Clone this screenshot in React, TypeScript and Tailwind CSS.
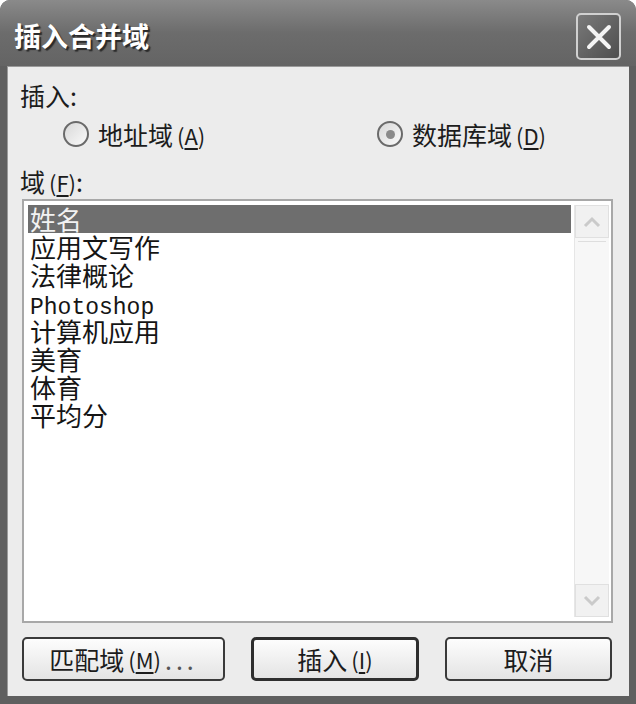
import type { ReactNode } from 'react'

const FONT = { fontFamily: '"Noto Sans CJK SC", "Liberation Sans", sans-serif' }

const fields = ['姓名', '应用文写作', '法律概论', 'Photoshop', '计算机应用', '美育', '体育', '平均分']

function Key({ k }: { k: string }) {
  return (
    <span className="ml-[4px] text-[22px]">
      (<span className="underline underline-offset-[3px]">{k}</span>)
    </span>
  )
}

function Radio({ checked, children }: { checked?: boolean; children: ReactNode }) {
  return (
    <div className="flex items-center gap-[9px]">
      <span className="flex h-[26px] w-[26px] items-center justify-center rounded-full border-2 border-[#6a6a6a] bg-gradient-to-br from-[#d8d8d8] to-[#fafafa]">
        {checked && <span className="h-[9px] w-[9px] rounded-full bg-[#8a8a8a]" />}
      </span>
      <span className="text-[25px] leading-[28px] text-[#1c1c1c]">{children}</span>
    </div>
  )
}

function Btn({ w, strong, children }: { w: string; strong?: boolean; children: ReactNode }) {
  return (
    <button
      className={`${w} flex h-[44px] items-center justify-center rounded-[5px] bg-gradient-to-b from-[#fdfdfd] to-[#e4e4e4] text-[25px] leading-none text-[#1c1c1c] ${
        strong ? 'border-[3px] border-[#2e2e2e]' : 'border-2 border-[#3a3a3a]'
      }`}
    >
      {children}
    </button>
  )
}

function Chevron({ up }: { up?: boolean }) {
  return (
    <svg width="20" height="12" viewBox="0 0 20 12">
      <path
        d={up ? 'M3 10 L10 3 L17 10' : 'M3 2 L10 9 L17 2'}
        fill="none"
        stroke="#cacaca"
        strokeWidth="3"
      />
    </svg>
  )
}

export default function App() {
  return (
    <div className="h-[704px] w-[636px] bg-white" style={FONT}>
      <div className="flex h-full flex-col overflow-hidden rounded-t-[10px] bg-[#5f5f5f]">
        {/* title bar */}
        <div className="flex h-[66px] shrink-0 items-start justify-between bg-gradient-to-b from-[#8a8a8a] via-[#6c6c6c] to-[#646464] pl-[14px] pr-[15px]">
          <span
            className="mt-[20px] text-[27px] font-bold leading-[32px] text-white"
            style={{ textShadow: '2px 2px 1px #2a2a2a' }}
          >
            插入合并域
          </span>
          <div className="mt-[13px] flex h-[47px] w-[45px] items-center justify-center rounded-[5px] border-2 border-[#d0d0d0] bg-gradient-to-br from-[#7a7a7a] to-[#4e4e4e]">
            <svg width="30" height="30" viewBox="0 0 30 30">
              <path d="M5 5 L25 25 M25 5 L5 25" stroke="#f4f4f4" strokeWidth="4" strokeLinecap="round" />
            </svg>
          </div>
        </div>

        {/* client area */}
        <div className="mx-[7px] mb-[8px] flex flex-1 flex-col border-l border-t border-[#9a9a9a] bg-[#ececec] pl-[12px] pr-[16px] pt-[14px] text-[#1c1c1c]">
          <div className="h-[28px] text-[25px] leading-[28px]">插入:</div>

          <div className="mt-[11px] flex h-[28px] items-center pl-[43px]">
            <div className="w-[314px]">
              <Radio>
                地址域<Key k="A" />
              </Radio>
            </div>
            <Radio checked>
              数据库域<Key k="D" />
            </Radio>
          </div>

          <div className="mt-[19px] h-[28px] text-[25px] leading-[28px]">
            域<Key k="F" />:
          </div>

          {/* list */}
          <div className="ml-[2px] mt-[4px] flex h-[424px] border-2 border-[#a8a8a8] bg-white p-[4px] pr-[2px]">
            <div className="flex-1">
              {fields.map((f, i) => (
                <div
                  key={f}
                  className={`h-[28px] pl-[2px] text-[26px] leading-[28px] ${
                    i === 0 ? 'bg-[#6e6e6e] text-[#f2f2f2]' : 'text-[#151515]'
                  }`}
                >
                  {f === 'Photoshop' ? (
                    <span className="text-[23px]" style={{ fontFamily: '"Liberation Mono", monospace' }}>
                      {f}
                    </span>
                  ) : (
                    f
                  )}
                </div>
              ))}
            </div>
            <div className="ml-[3px] flex w-[35px] flex-col border-l border-[#e6e6e6] bg-[#f7f7f7]">
              <div className="flex h-[33px] items-center justify-center border border-[#e0e0e0] bg-[#f1f1f1]">
                <Chevron up />
              </div>
              <div className="mx-[3px] mt-[3px] h-px bg-[#dedede]" />
              <div className="flex-1" />
              <div className="flex h-[33px] items-center justify-center border border-[#e0e0e0] bg-[#f1f1f1]">
                <Chevron />
              </div>
            </div>
          </div>

          {/* buttons */}
          <div className="ml-[2px] mt-[14px] flex gap-[26px]">
            <Btn w="w-[203px]">
              匹配域<Key k="M" />
              <span className="ml-[4px] tracking-[4px] text-[#555]">...</span>
            </Btn>
            <Btn w="w-[168px]" strong>
              插入<Key k="I" />
            </Btn>
            <Btn w="w-[167px]">取消</Btn>
          </div>
        </div>
      </div>
    </div>
  )
}
